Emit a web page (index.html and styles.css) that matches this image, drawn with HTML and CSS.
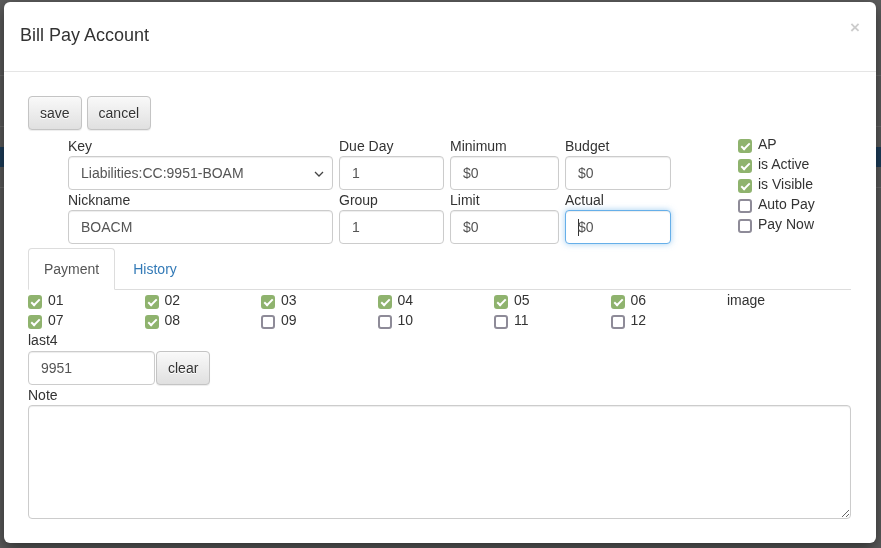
FILE: index.html
```html
<!DOCTYPE html>
<html>
<head>
<meta charset="utf-8">
<title>Bill Pay Account</title>
<link rel="stylesheet" href="styles.css">
</head>
<body>
<div class="page">
  <div class="page-line line-a"></div>
  <div class="page-line line-b"></div>
  <div class="page-bar"></div>
  <div class="page-line line-c"></div>
</div>

<div class="modal">
  <div class="modal-header">
    <h4 class="modal-title">Bill Pay Account</h4>
    <span class="close">×</span>
  </div>
  <div class="modal-body">
    <div class="toolbar">
      <button class="btn">save</button>
      <button class="btn">cancel</button>
    </div>

    <div class="top-row">
      <div class="fields">
        <div class="field f-key">
          <label>Key</label>
          <div class="select-wrap">
            <select class="form-control"><option>Liabilities:CC:9951-BOAM</option></select>
            <svg class="chev" width="10" height="6" viewBox="0 0 10 6"><path d="M1 1l4 4 4-4" fill="none" stroke="#444" stroke-width="1.3"/></svg>
          </div>
        </div>
        <div class="field f-due">
          <label>Due Day</label>
          <input class="form-control" value="1">
        </div>
        <div class="field f-min">
          <label>Minimum</label>
          <input class="form-control" value="$0">
        </div>
        <div class="field f-bud">
          <label>Budget</label>
          <input class="form-control" value="$0">
        </div>
        <div class="field f-key">
          <label>Nickname</label>
          <input class="form-control" value="BOACM">
        </div>
        <div class="field f-due">
          <label>Group</label>
          <input class="form-control" value="1">
        </div>
        <div class="field f-min">
          <label>Limit</label>
          <input class="form-control" value="$0">
        </div>
        <div class="field f-bud">
          <label>Actual</label>
          <div class="form-control focused"><span class="caret"></span>$0</div>
        </div>
      </div>
      <div class="flags">
        <div class="chk"><span class="box on"></span>AP</div>
        <div class="chk"><span class="box on"></span>is Active</div>
        <div class="chk"><span class="box on"></span>is Visible</div>
        <div class="chk"><span class="box"></span>Auto Pay</div>
        <div class="chk"><span class="box"></span>Pay Now</div>
      </div>
    </div>

    <ul class="nav-tabs">
      <li class="active"><a>Payment</a></li>
      <li><a class="link">History</a></li>
    </ul>

    <div class="months">
      <div class="chk"><span class="box on"></span>01</div>
      <div class="chk"><span class="box on"></span>02</div>
      <div class="chk"><span class="box on"></span>03</div>
      <div class="chk"><span class="box on"></span>04</div>
      <div class="chk"><span class="box on"></span>05</div>
      <div class="chk"><span class="box on"></span>06</div>
      <div class="img-label">image</div>
      <div class="chk"><span class="box on"></span>07</div>
      <div class="chk"><span class="box on"></span>08</div>
      <div class="chk"><span class="box"></span>09</div>
      <div class="chk"><span class="box"></span>10</div>
      <div class="chk"><span class="box"></span>11</div>
      <div class="chk"><span class="box"></span>12</div>
    </div>

    <label class="blk">last4</label>
    <div class="last4-row">
      <input class="form-control last4" value="9951">
      <button class="btn">clear</button>
    </div>

    <label class="blk">Note</label>
    <textarea class="form-control note"></textarea>
  </div>
</div>
</body>
</html>
```

FILE: styles.css
```css
html, body {
  margin: 0;
  padding: 0;
}
body {
  background: #5c5c5c;
  width: 881px;
  height: 548px;
  overflow: hidden;
  font-family: "Liberation Sans", Arial, sans-serif;
  font-size: 14px;
  line-height: 20px;
  color: #333;
}
.page {
  height: 548px;
  display: flex;
  flex-direction: column;
}
.page-line {
  height: 1px;
  background: #6c6c6c;
}
.line-a { margin-top: 75px; }
.line-b { margin-top: 50px; }
.page-bar {
  margin-top: 20px;
  height: 20px;
  background: #1d3e5c;
}
.line-c { margin-top: 20px; }

.modal {
  position: fixed;
  left: 4px;
  top: 2px;
  width: 872px;
  height: 541px;
  box-sizing: border-box;
  background: #fff;
  border-radius: 6px;
  box-shadow: 0 5px 15px rgba(0,0,0,.5);
}
.modal-header {
  display: flex;
  justify-content: space-between;
  align-items: flex-start;
  padding: 20px 15px 23px 16px;
  border-bottom: 1px solid #e5e5e5;
}
.modal-title {
  margin: 0;
  font-size: 18px;
  font-weight: normal;
  line-height: 26px;
}
.close {
  font-size: 17px;
  font-weight: bold;
  line-height: 1;
  color: #000;
  opacity: .2;
  margin-top: -3px;
  margin-right: 1px;
}
.modal-body {
  padding: 24px 24px 0 24px;
}
.btn {
  font-family: inherit;
  font-size: 14px;
  line-height: 20px;
  color: #333;
  padding: 6px 11px;
  height: 34px;
  border: 1px solid #c4c4c4;
  border-radius: 4px;
  background-image: linear-gradient(to bottom, #f9f9f9 0, #e0e0e0 100%);
  text-shadow: 0 1px 0 #fff;
  box-shadow: inset 0 1px 0 rgba(255,255,255,.15), 0 1px 1px rgba(0,0,0,.075);
  margin: 0;
}
.toolbar {
  display: flex;
  gap: 5px;
}
.top-row {
  display: flex;
  margin-top: 6px;
}
.fields {
  margin-left: 40px;
  display: grid;
  grid-template-columns: 265px 105px 109px 106px;
  column-gap: 6px;
}
.field label {
  display: block;
  height: 20px;
}
.form-control {
  display: block;
  box-sizing: border-box;
  width: 100%;
  height: 34px;
  padding: 6px 12px;
  font-family: inherit;
  font-size: 14px;
  line-height: 20px;
  color: #555;
  background: #fff;
  border: 1px solid #ccc;
  border-radius: 4px;
  box-shadow: inset 0 1px 1px rgba(0,0,0,.075);
  margin: 0;
}
.select-wrap {
  position: relative;
}
select.form-control {
  appearance: none;
  -webkit-appearance: none;
}
.chev {
  position: absolute;
  right: 9px;
  top: 15px;
}
.focused {
  border-color: #66afe9;
  box-shadow: inset 0 1px 1px rgba(0,0,0,.075), 0 0 6px rgba(102,175,233,.6);
  position: relative;
}
.caret {
  display: inline-block;
  width: 1px;
  height: 17px;
  background: #333;
  vertical-align: -4px;
  margin-right: -1px;
}
.flags {
  margin-left: 67px;
  margin-top: -2px;
}
.chk {
  display: flex;
  align-items: center;
  height: 20px;
  color: #333;
}
.box {
  box-sizing: border-box;
  width: 14px;
  height: 14px;
  border: 2px solid #8e8b98;
  border-radius: 3px;
  margin-right: 6px;
  margin-top: 3px;
  position: relative;
  flex: none;
}
.box.on {
  background: #8fb36e;
  border-color: #8fb36e;
}
.box.on::after {
  content: "";
  position: absolute;
  left: 3px;
  top: 0px;
  width: 3px;
  height: 7px;
  border: solid #fff;
  border-width: 0 2px 2px 0;
  transform: rotate(45deg);
}
.nav-tabs {
  list-style: none;
  margin: 4px 0 0 0;
  padding: 0;
  display: flex;
  border-bottom: 1px solid #ddd;
  width: 823px;
}
.nav-tabs li {
  margin-bottom: -1px;
  margin-right: 2px;
}
.nav-tabs a {
  display: block;
  padding: 10px 15px;
  line-height: 20px;
  border: 1px solid transparent;
  border-radius: 4px 4px 0 0;
}
.nav-tabs .active a {
  color: #555;
  background: #fff;
  border-color: #ddd #ddd transparent #ddd;
}
.nav-tabs .link {
  color: #337ab7;
}
.months {
  display: grid;
  grid-template-columns: repeat(7, 116.5px);
}
.blk {
  display: block;
  height: 20px;
}
.last4-row {
  display: flex;
  gap: 1px;
  margin-top: 1px;
}
.last4 {
  width: 127px;
}
.note {
  height: 114px;
  margin-top: 0;
  resize: vertical;
  width: 823px;
}
```
